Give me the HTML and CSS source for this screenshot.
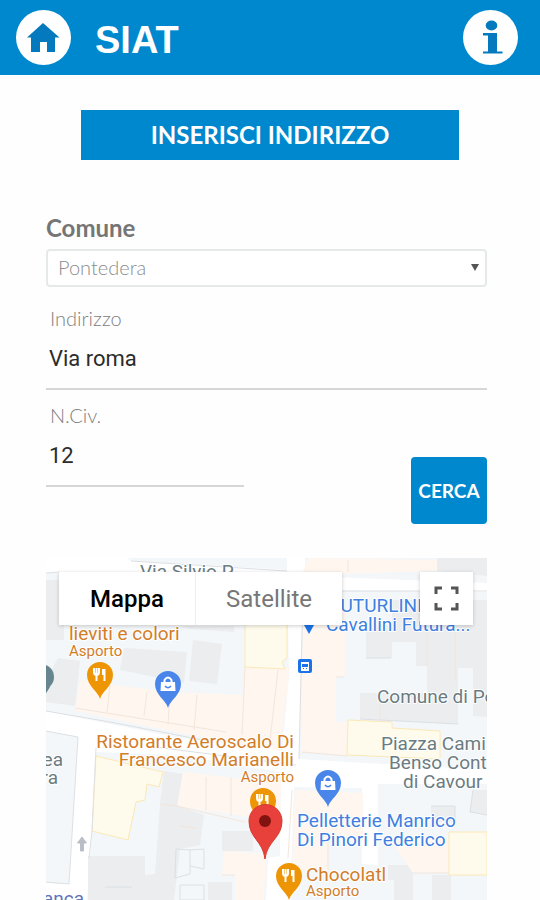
FILE: index.html
```html
<!DOCTYPE html>
<html lang="it">
<head>
<meta charset="utf-8">
<meta name="viewport" content="width=device-width, initial-scale=1">
<title>SIAT</title>
<link rel="stylesheet" href="styles.css">
</head>
<body>
<header class="topbar">
  <a class="round" href="#" aria-label="Home">
    <svg viewBox="0 0 55 55" aria-hidden="true"><path d="M27 13 L43.500 27.500 H39 V42 H31 V32 H24 V42 H15 V27.500 H11 Z"/></svg>
  </a>
  <h1 class="brand">SIAT</h1>
  <a class="round" href="#" aria-label="Info">
    <svg viewBox="0 0 55 55" aria-hidden="true"><ellipse cx="28.500" cy="15.500" rx="5.800" ry="5"/><path d="M20 23 H34 V41.500 H39.500 V43.500 H20 V41.500 H25 V25.500 H20 Z"/></svg>
  </a>
</header>
<main class="page">
  <h2 class="banner">INSERISCI INDIRIZZO</h2>
  <form class="form">
    <label class="title" for="comune">Comune</label>
    <div class="picker">
      <select id="comune"><option>Pontedera</option></select>
    </div>
    <label class="label street-label" for="via">Indirizzo</label>
    <input class="field" id="via" type="text" value="Via roma">
    <div class="row">
      <div class="number">
        <label class="label" for="civico">N.Civ.</label>
        <input class="field" id="civico" type="text" value="12">
      </div>
      <button class="search" type="button">CERCA</button>
    </div>
  </form>
  <section class="map" aria-label="Mappa">
    <svg class="canvas" viewBox="46 558 441 342" preserveAspectRatio="xMidYMin slice">
      <defs>
        <g id="pin"><path d="M0 24 C-2 16 -13 11 -13 0 A13 13 0 1 1 13 0 C13 11 2 16 0 24Z"/></g>
        <g id="food" fill="none" stroke="#fff" stroke-width="2"><path d="M-6 -7 V-3 Q-6 0 -3.500 0 Q-1 0 -1 -3 V-7 M-3.500 -7 V6 M4.500 6 V-6" /><path d="M3.500 -6 V0" stroke-width="3"/></g>
        <g id="bag"><path fill="#fff" d="M-7 -2 H7 L7.500 7 H-7.500Z"/><path d="M-3.500 -1 V-4 Q0 -9 3.500 -4 V-1" fill="none" stroke="#fff" stroke-width="2"/><path d="M-3 2 Q0 5.500 3 2" fill="none" stroke="#4a86ea" stroke-width="1.500"/></g>
      </defs>
      <rect class="ground" x="46" y="558" width="441" height="342"/>
      <g class="road">
        <path d="M46 558 H127 L131 561 L290 570 V576 L46 573Z"/>
        <path d="M287 558 H305 V576 L487 583 V592 L303 590 L299 759 L487 770 V784 L378 784 V865 L362 864 V788 L294 787 L290 900 H266 L268 858 L280 856 L281 772 L180 755 L96 752 L92 831 L87 900 H46 V883 L69 884 L78 737 L46 731 V711 L180 738 L282 750 L289 676Z"/>
      </g>
      <g class="grey">
        <path d="M46 580 H64 V640 H46Z M180 626 H234 V632 L190 629Z M124 648 L187 652 L184 683 L120 670Z M193 640 L222 644 L217 684 L189 681Z M58 658 L80 661 L75 706 L46 702 V680Z"/>
        <path d="M437 558 H487 V576 L437 571Z M392 600 H487 V717 L473 716 V668 H458 V724 L360 719 V693 H427 V666 H416 V642 H392 V658 H366 V625 H392Z"/>
        <path d="M164 771 L183 774 L178 806 L204 815 L200 845 L180 849 L174 900 H88 V856 H145 V875 L155 874 L160 804Z M222 831 H253 V851 H222Z M208 882 H232 V900 H208Z M388 865 H413 V900 H394 V880 H388Z M432 875 H451 V900 H432Z M473 790 H487 V815 L470 812Z M431 806 H455 V822 H431Z"/>
      </g>
      <g class="orange">
        <path d="M80 680 L107 684 L170 692 L244 695 V667 H290 L280 751 L180 733 L75 711Z M308 558 L437 560 V571 L302 575Z M303 600 H345 V675 L336 677 V722 H347 V755 L301 752Z"/>
        <path d="M183 772 L281 783 L280 822 L177 806Z M224 851 L266 854 L264 900 H235 V874 H222Z M295 790 L363 793 V840 H328 V870 H292Z M391 840 L449 838 V873 L412 872Z"/>
      </g>
      <g class="yellow">
        <path d="M245 620 H287 V658 L282 662 L285 669 L245 667Z M96 756 L163 772 L159 787 L147 784 L145 800 L136 802 L128 840 L92 831Z M348 720 L392 722 V728 L440 731 V759 L347 755Z M449 832 H487 V875 H449Z"/>
      </g>
      <g class="outline"><path d="M46 711 L110 722 L208 741 M46 731 L78 737 L69 884 L46 882 M96 748 L92 831 L89 858 M296 765 L155 747 M303 592 L299 759 M302 591 H487 M46 573 L60 572 M131 561 L287 571 M176 849 L190 850 V874 L175 878Z M190 850 L204 849 V869 L190 866 M180 885 H204 V900 H180Z M366 658 H391 M360 719 L458 724 M431 806 H455 V822 M487 815 L470 812 L473 790 M105 887 H132"/></g>
      <g class="seams"><path d="M107 712 L110 685 M144 716 L147 692 M170 692 L168 725 M197 695 L194 730 M245 667 L242 735 M278 670 L269 749 M348 560 V572 M336 677 H344 M75 708 L226 732 M302 752 L347 756 M427 610 V666 M455 600 V680 M206 777 V810 M231 777 V816 M177 806 L245 822 M380 694 V719 M180 826 L197 828 M222 875 H235 M413 873 H449 M328 840 V870 M292 790 L288 858 M160 804 L178 806"/></g>
      <path d="M80.500 851 V843 H77.500 L82 837 L86.500 843 H83.500 V851Z" fill="#b9bec6" stroke="#b9bec6" stroke-width="1"/>
      <circle cx="41" cy="677" r="13" fill="#66858e"/><path d="M50 687 L43 698 V687Z" fill="#66858e"/>
      <path d="M304 625 H314 L309 634Z" fill="#1a73e8"/>
      <rect x="298" y="659" width="14" height="14" rx="2" fill="#1a73e8"/><path d="M301 662 H309 V671 H301Z" fill="#fff"/><path d="M302 664 H308 V667 H302Z M303 668 H304 V669 H303Z M306 668 H307 V669 H306Z" fill="#1a73e8"/>
      <g transform="translate(100 675)" fill="#ee9505"><use href="#pin"/><use href="#food"/></g>
      <g transform="translate(168 684)" fill="#4a86ea"><use href="#pin"/><use href="#bag"/></g>
      <g transform="translate(328 783)" fill="#4a86ea"><use href="#pin"/><use href="#bag"/></g>
      <g transform="translate(263 801)" fill="#ee9505"><use href="#pin"/><use href="#food"/></g>
      <g transform="translate(289 876)" fill="#ee9505"><use href="#pin"/><use href="#food"/></g>
      <path d="M265 859 C263 841 249 838 249 821 A16.500 16.500 0 0 1 282 821 C282 838 267 841 265 859Z" fill="#e8403a" stroke="#d8382f"/><circle cx="265" cy="821" r="6" fill="#811411"/>
      <g class="place dark">
        <text x="140" y="578">Via Silvio P</text>
        <text x="377" y="703">Comune di Po</text>
        <text x="381" y="750">Piazza Cami</text><text x="389" y="769">Benso Cont</text><text x="403" y="788">di Cavour</text>
        <text x="63" y="766" text-anchor="end">ea</text><text x="58" y="784" text-anchor="end">ra</text>
      </g>
      <g class="place food">
        <text x="69" y="640">lieviti e colori</text><text class="small" x="69" y="656">Asporto</text>
        <text x="294" y="748" text-anchor="end">Ristorante Aeroscalo Di</text><text x="294" y="766" text-anchor="end">Francesco Marianelli</text><text class="small" x="294" y="782" text-anchor="end">Asporto</text>
        <text x="306" y="881">Chocolatl</text><text class="small" x="306" y="896">Asporto</text>
      </g>
      <g class="place shop">
        <text x="330" y="612">FUTURLINE</text><text x="326" y="631">Cavallini Futura...</text>
        <text x="297" y="827">Pelletterie Manrico</text><text x="297" y="846">Di Pinori Federico</text>
      </g>
      <text class="place bank" x="84" y="905" text-anchor="end">anca</text>
    </svg>
    <div class="types">
      <button class="type active" type="button">Mappa</button>
      <button class="type" type="button">Satellite</button>
    </div>
    <button class="expand" type="button" aria-label="Schermo intero">
      <svg viewBox="0 0 27 27" aria-hidden="true"><path d="M3 9 V3 H9 M18 3 H24 V9 M24 18 V24 H18 M9 24 H3 V18"/></svg>
    </button>
  </section>
</main>
</body>
</html>
```
FILE: styles.css
```css
* {
  box-sizing: border-box;
}

body {
  margin: 0;
  min-height: 100vh;
  display: flex;
  flex-direction: column;
  background: #fefefe;
  font-family: Lato, "Open Sans", sans-serif;
}

.topbar {
  display: flex;
  align-items: center;
  gap: 24px;
  padding: 10px 22px 10px 16px;
  background: #0088ce;
}

.round {
  width: 55px;
  height: 55px;
  border-radius: 50%;
  background: #fff;
}

.round svg {
  display: block;
  fill: #0479be;
}

.brand {
  flex: 1;
  margin: 0;
  padding-top: 4px;
  color: #fff;
  font: bold 38px/44px "Liberation Sans", sans-serif;
}

.page {
  flex: 1;
  display: flex;
  flex-direction: column;
  padding: 35px 53px 0 46px;
}

.banner {
  margin: 0 28px 0 35px;
  background: #0088ce;
  color: #fff;
  font-size: 24px;
  font-weight: 700;
  line-height: 50px;
  text-align: center;
}

.form {
  display: flex;
  flex-direction: column;
  padding: 55px 0 34px;
}

.title {
  color: #757575;
  font-size: 24px;
  font-weight: 700;
  line-height: 26px;
}

.picker {
  position: relative;
  margin-top: 8px;
}

.picker select {
  display: block;
  width: 100%;
  height: 38px;
  padding: 0 10px 2px;
  border: 2px solid #e6e9e9;
  border-radius: 4px;
  appearance: none;
  background: #fff;
  color: #8c8c8c;
  font: 300 20px Lato, sans-serif;
}

.picker::after {
  content: "";
  position: absolute;
  right: 8px;
  top: 15px;
  border: 4px solid transparent;
  border-top: 7px solid #555;
  border-bottom: 0;
  pointer-events: none;
}

.label {
  display: block;
  padding-left: 4px;
  color: #808080;
  font-size: 20px;
  font-weight: 300;
  line-height: 24px;
}

.street-label {
  margin-top: 19px;
}

.field {
  display: block;
  width: 100%;
  height: 60px;
  padding: 0 3px 1px;
  border: 0;
  border-bottom: 2px solid #d6d6d6;
  border-radius: 0;
  background: transparent;
  color: #2c2c2c;
  font: 22px Roboto, sans-serif;
}

.row {
  display: flex;
  align-items: flex-end;
  justify-content: space-between;
  margin-top: 13px;
}

.number {
  width: 45%;
  padding-bottom: 37px;
}

.search {
  width: 76px;
  height: 67px;
  padding: 0;
  border: 0;
  border-radius: 4px;
  background: #0088ce;
  color: #fff;
  font: 700 19px Lato, sans-serif;
}

.map {
  position: relative;
  flex: 1;
  min-height: 342px;
  overflow: hidden;
}

.canvas {
  display: block;
  width: 100%;
  height: 342px;
}

.ground { fill: #f3f7f9; }
.grey { fill: #ebedef; }
.orange { fill: #fef6ef; }
.yellow { fill: #fffbec; stroke: #fbe8b6; stroke-width: 1; }
.outline { fill: none; stroke: #dce0e4; stroke-width: 1; }
.seams { fill: none; stroke: #f3e6dc; stroke-width: 1; }
.road { fill: #fff; }

.place {
  font: 19px Roboto, sans-serif;
  stroke: #fff;
  stroke-width: 2;
  stroke-linejoin: round;
  paint-order: stroke;
}

.place .small { font-size: 15px; }
.dark { fill: #6b7c81; }
.place.food { fill: #d27d28; }
.shop { fill: #4080e0; }
.bank { fill: #6272bb; }

.types {
  position: absolute;
  left: 13px;
  top: 14px;
  display: flex;
  box-shadow: 0 1px 4px rgba(0, 0, 0, 0.2);
}

.type {
  width: 146px;
  height: 53px;
  padding: 0;
  border: 0;
  background: #fff;
  color: #777;
  font: 24px Roboto, sans-serif;
}

.type.active {
  width: 137px;
  border-right: 1px solid #eee;
  color: #000;
  font-weight: 500;
}

.expand {
  position: absolute;
  right: 14px;
  top: 14px;
  width: 53px;
  height: 53px;
  padding: 13px;
  border: 0;
  background: #fff;
  box-shadow: 0 1px 4px rgba(0, 0, 0, 0.2);
}

.expand svg {
  display: block;
  fill: none;
  stroke: #555;
  stroke-width: 3;
}
```
